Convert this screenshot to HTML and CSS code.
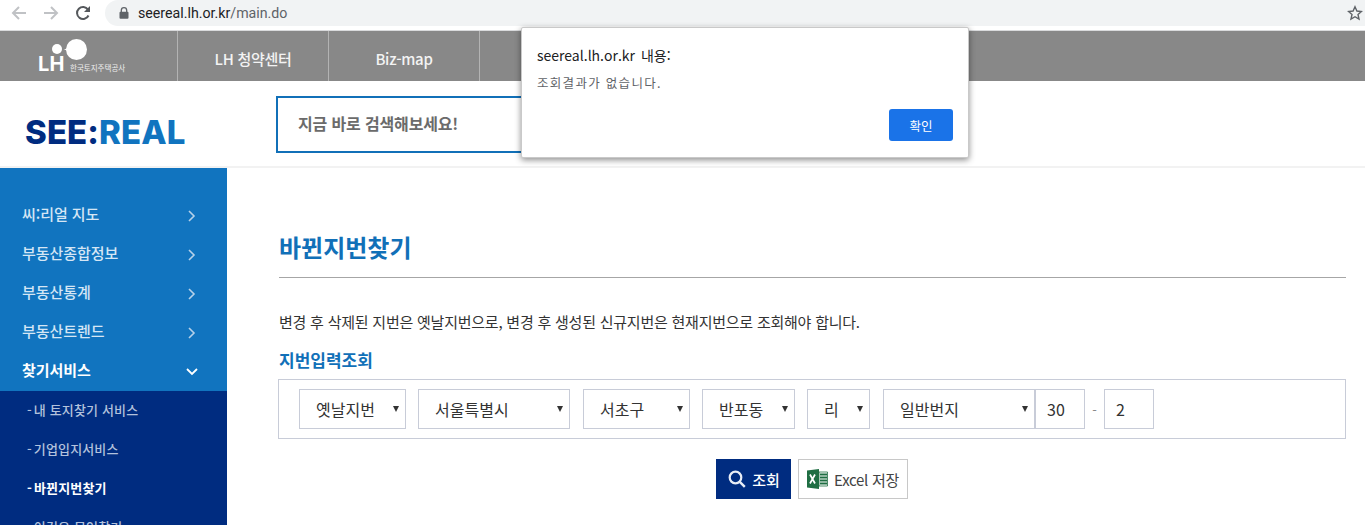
FILE: index.html
```html
<!DOCTYPE html>
<html lang="ko">
<head>
<meta charset="utf-8">
<title>SEE:REAL</title>
<link rel="stylesheet" href="styles.css">
</head>
<body>
<div class="chrome">
  <svg class="nav-icon back" width="16" height="16" viewBox="0 0 16 16"><path d="M15 8H2M8 2L2 8l6 6" fill="none" stroke="#c0c2c5" stroke-width="2"/></svg>
  <svg class="nav-icon fwd" width="16" height="16" viewBox="0 0 16 16"><path d="M1 8h13M8 2l6 6-6 6" fill="none" stroke="#c0c2c5" stroke-width="2"/></svg>
  <svg class="nav-icon reload" width="16" height="16" viewBox="0 0 16 16"><path d="M13.500 10.500A6 6 0 1 1 13 4.600" fill="none" stroke="#55585c" stroke-width="2"/><path d="M15 1v6H9z" fill="#55585c"/></svg>
  <div class="omnibox">
    <svg class="lock" width="10" height="12" viewBox="0 0 10 12"><path d="M2.300 5V3.400a2.700 2.700 0 0 1 5.400 0V5" fill="none" stroke="#5f6368" stroke-width="1.300"/><rect x="0.500" y="4.800" width="9" height="7" rx="1" fill="#5f6368"/></svg>
    <span class="url">seereal.lh.or.kr<span class="url-path">/main.do</span></span>
    <svg class="star" width="16" height="16" viewBox="0 0 16 16"><path d="M8 1.800l1.900 4.200 4.500.5-3.400 3 1 4.500L8 11.700 4 14l1-4.500-3.400-3 4.500-.5z" fill="none" stroke="#5f6368" stroke-width="1.400"/></svg>
  </div>
</div>

<nav class="topbar">
  <a class="top-logo">
    <svg class="lh-mark" width="36" height="22" viewBox="0 0 36 22"><circle cx="5" cy="10" r="5" fill="#fff"/><circle cx="24.500" cy="10.500" r="10.500" fill="#fff"/><path d="M11.500 10.500c4 0 6-4 9-9v18c-3-5-5-9-9-9z" fill="#fff"/></svg>
    <span class="lh-text">LH</span>
    <span class="lh-sub">한국토지주택공사</span>
  </a>
  <a class="top-link">LH 청약센터</a>
  <a class="top-link">Biz-map</a>
  <a class="top-link last"></a>
</nav>

<header class="header">
  <div class="brand"><span class="brand-dark">SEE:</span><span class="brand-light">REAL</span></div>
  <div class="searchbox">지금 바로 검색해보세요!</div>
</header>

<div class="page">
  <aside class="side">
    <ul class="menu">
      <li class="menu-item">씨:리얼 지도<svg class="chev" width="8" height="12" viewBox="0 0 8 12"><path d="M1 1l5 5-5 5" fill="none" stroke="#b6d1e9" stroke-width="1.600"/></svg></li>
      <li class="menu-item">부동산종합정보<svg class="chev" width="8" height="12" viewBox="0 0 8 12"><path d="M1 1l5 5-5 5" fill="none" stroke="#b6d1e9" stroke-width="1.600"/></svg></li>
      <li class="menu-item">부동산통계<svg class="chev" width="8" height="12" viewBox="0 0 8 12"><path d="M1 1l5 5-5 5" fill="none" stroke="#b6d1e9" stroke-width="1.600"/></svg></li>
      <li class="menu-item">부동산트렌드<svg class="chev" width="8" height="12" viewBox="0 0 8 12"><path d="M1 1l5 5-5 5" fill="none" stroke="#b6d1e9" stroke-width="1.600"/></svg></li>
      <li class="menu-item open">찾기서비스<svg class="chev-down" width="12" height="8" viewBox="0 0 12 8"><path d="M1 1l5 5 5-5" fill="none" stroke="#fff" stroke-width="1.800"/></svg></li>
    </ul>
    <ul class="submenu">
      <li class="sub-item"><span class="sub-dash">-</span>내 토지찾기 서비스</li>
      <li class="sub-item"><span class="sub-dash">-</span>기업입지서비스</li>
      <li class="sub-item active"><span class="sub-dash">-</span>바뀐지번찾기</li>
      <li class="sub-item"><span class="sub-dash">-</span>이것은 무엇찾기</li>
    </ul>
  </aside>

  <main class="content">
    <h1 class="title">바뀐지번찾기</h1>
    <p class="desc">변경 후 삭제된 지번은 옛날지번으로, 변경 후 생성된 신규지번은 현재지번으로 조회해야 합니다.</p>
    <h2 class="subtitle">지번입력조회</h2>
    <form class="filter">
      <span class="sel-wrap w-a"><select class="sel"><option>옛날지번</option></select></span>
      <span class="sel-wrap w-b"><select class="sel"><option>서울특별시</option></select></span>
      <span class="sel-wrap w-c"><select class="sel"><option>서초구</option></select></span>
      <span class="sel-wrap w-d"><select class="sel"><option>반포동</option></select></span>
      <span class="sel-wrap w-e"><select class="sel"><option>리</option></select></span>
      <span class="sel-wrap w-f"><select class="sel"><option>일반번지</option></select></span>
      <input class="num" value="30">
      <span class="dash">-</span>
      <input class="num" value="2">
    </form>
    <div class="actions">
      <button class="btn-search" type="button">
        <svg width="18" height="18" viewBox="0 0 18 18"><circle cx="7.500" cy="7.500" r="5.800" fill="none" stroke="#e8edf6" stroke-width="2.200"/><path d="M11.800 11.800L16.800 16.800" stroke="#e8edf6" stroke-width="2.400"/></svg>
        조회
      </button>
      <button class="btn-excel" type="button">
        <svg width="21" height="20" viewBox="0 0 21 20"><path d="M0 1.500L12 0v20L0 18.500z" fill="#1f6e43"/><path d="M12 3h8.500v14H12z" fill="#fff" stroke="#1f6e43" stroke-width=".8"/><path d="M13 5.500h7M13 8.500h7M13 11.500h7M13 14.500h7" stroke="#1f6e43" stroke-width="1.800"/><path d="M3 5.500l5 9M8 5.500l-5 9" stroke="#fff" stroke-width="1.700"/></svg>
        Excel 저장
      </button>
    </div>
  </main>
</div>

<div class="dialog" role="alertdialog">
  <div class="dlg-title">seereal.lh.or.kr 내용:</div>
  <div class="dlg-msg">조회결과가 없습니다.</div>
  <div class="dlg-foot"><button class="dlg-ok" type="button">확인</button></div>
</div>
</body>
</html>
```
FILE: styles.css
```css
* { box-sizing: border-box; }
html, body { margin: 0; padding: 0; height: 525px; overflow: hidden; background: #fff; }
body { font-family: "Noto Sans CJK KR", "Noto Sans", sans-serif; color: #333; position: relative; }
ul { list-style: none; margin: 0; padding: 0; }

.chrome { height: 31px; display: flex; align-items: flex-start; background: #fff; border-bottom: 1px solid #d9dadc; }
.nav-icon { flex: none; margin-top: 5px; }
.back { margin-left: 11px; }
.fwd { margin-left: 16px; }
.reload { margin-left: 16px; }
.omnibox { flex: 1; height: 26px; margin-left: 14px; background: #f1f3f4; border-radius: 13px 0 0 13px; display: flex; align-items: center; padding: 0 2px 0 14px; }
.lock { flex: none; }
.url { margin-left: 9px; font: 14.200px/26px "Roboto", sans-serif; color: #202124; flex: 1; }
.url-path { color: #5f6368; }

.topbar { height: 50px; background: #888; display: flex; color: #fff; }
.top-logo { width: 178px; position: relative; border-right: 1px solid #b3b3b3; }
.lh-mark { position: absolute; left: 52px; top: 8px; }
.lh-text { position: absolute; left: 38px; top: 21px; font: 700 20px/24px "Inter", sans-serif; letter-spacing: .3px; }
.lh-sub { position: absolute; left: 70px; top: 31px; font-size: 7.500px; line-height: 12px; white-space: nowrap; color: #eee; }
.top-link { width: 151px; border-right: 1px solid #b3b3b3; text-align: center; font-size: 15px; line-height: 56px; font-weight: 500; color: #f3f3f3; letter-spacing: -0.3px; }
.top-link.last { border-right: 0; }

.header { height: 87px; display: flex; align-items: flex-start; border-bottom: 2px solid #f2f2f2; }
.brand { width: 276px; padding: 29px 0 0 25px; font: 800 33px/44px "Inter", sans-serif; letter-spacing: .1px; white-space: nowrap; }
.brand-dark { color: #002c80; }
.brand-light { color: #1174bf; }
.searchbox { width: 300px; height: 57px; margin-top: 15px; border: 2px solid #1170b8; padding-left: 20px; line-height: 50px; font-size: 16px; font-weight: 700; color: #6b6b6b; letter-spacing: -0.15px; }

.page { display: flex; height: 357px; }
.side { width: 227px; flex: none; background: #1174bf; padding-top: 28px; overflow: hidden; display: flex; flex-direction: column; }
.menu-item { height: 39px; padding: 0 31px 4px 22px; display: flex; align-items: center; justify-content: space-between; color: #d5e6f5; font-size: 15px; font-weight: 500; letter-spacing: -0.05px; }
.chev, .chev-down { margin-top: 4px; }
.menu-item.open { color: #fff; font-weight: 700; padding-right: 29px; }
.submenu { background: #002c80; flex: 1; padding: 0 0 0 27px; }
.sub-item { height: 39px; line-height: 37px; color: #b3c2dc; font-size: 13px; font-weight: 500; letter-spacing: .15px; white-space: nowrap; }
.sub-dash { margin-right: 2px; }
.sub-item.active { color: #fff; font-weight: 700; }

.content { flex: 1; padding: 0 19px 0 51px; }
.title { margin: 0 0 30px 1px; height: 110px; padding-top: 58px; border-bottom: 1px solid #a6a6a6; font-size: 24px; line-height: 42px; font-weight: 700; color: #1170b8; letter-spacing: 0; }
.desc { margin: 0 0 0 1px; font-size: 15px; line-height: 28px; color: #333; letter-spacing: -0.23px; white-space: nowrap; }
.subtitle { margin: 10px 0 0 1px; font-size: 17px; line-height: 28px; font-weight: 700; color: #1170b8; letter-spacing: 0; }
.filter { margin-top: 5px; height: 60px; border: 1px solid #c8ccd8; padding: 9px 0 0 20px; display: flex; align-items: flex-start; }
.sel-wrap { display: block; position: relative; height: 40px; margin-right: 12px; flex: none; }
.sel-wrap::after { content: ""; position: absolute; right: 7px; top: 17px; border-left: 3px solid transparent; border-right: 3px solid transparent; border-top: 6px solid #333; pointer-events: none; }
.sel { appearance: none; -webkit-appearance: none; display: block; width: 100%; height: 40px; border: 1px solid #c8ccd8; background: #fff; margin: 0; padding: 0 0 0 16px; font-family: "Noto Sans CJK KR", sans-serif; font-size: 16px; color: #333; border-radius: 0; outline: 0; }
.w-a { width: 107px; }
.w-b { width: 152px; margin-right: 13px; }
.w-c { width: 107px; }
.w-d { width: 93px; }
.w-e { width: 63px; margin-right: 13px; }
.w-f { width: 152px; margin-right: 0; }
.num { width: 50px; height: 40px; border: 1px solid #c8ccd8; padding: 0 0 0 11px; font-family: "Noto Sans CJK KR", sans-serif; font-size: 16px; color: #333; border-radius: 0; outline: 0; }
.dash { width: 19px; text-align: center; line-height: 42px; color: #888; font-size: 13px; }

.actions { margin-top: 20px; display: flex; justify-content: center; gap: 7px; }
.btn-search { height: 40px; width: 75px; border: 0; background: #002c80; color: #fff; font-family: "Noto Sans CJK KR", sans-serif; font-size: 15px; font-weight: 500; display: flex; align-items: center; justify-content: center; gap: 6px; padding: 0 0 0 1px; }
.btn-excel { height: 40px; width: 110px; border: 1px solid #c8c8c8; background: #fff; color: #444; font-family: "Noto Sans CJK KR", sans-serif; font-size: 15px; letter-spacing: -0.3px; display: flex; align-items: center; justify-content: center; gap: 6px; padding: 0; }

.dialog { position: absolute; left: 521px; top: 27px; width: 448px; height: 131px; background: #fff; border-radius: 2px; border: 1px solid #c9c9c9; box-shadow: 0 2px 6px rgba(0,0,0,.45); padding: 15px 15px 0 15px; }
.dlg-title { font-size: 14px; line-height: 24px; color: #202124; word-spacing: 2px; letter-spacing: 0; }
.dlg-msg { margin-top: 5px; font-size: 12.500px; line-height: 22px; color: #5f6368; letter-spacing: 1.300px; }
.dlg-foot { display: flex; justify-content: flex-end; margin-top: 15px; }
.dlg-ok { width: 64px; height: 32px; border: 0; border-radius: 3px; background: #1a73e8; color: #fff; font-family: "Noto Sans CJK KR", sans-serif; font-size: 12.500px; padding: 0; }
```
